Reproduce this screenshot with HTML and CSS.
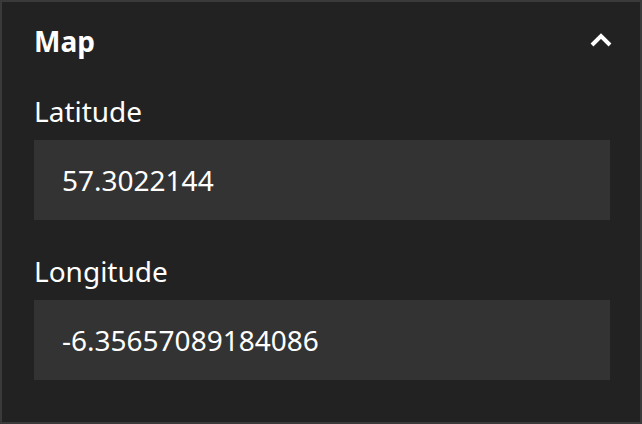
FILE: index.html
```html
<!DOCTYPE html>
<html>
<head>
<meta charset="utf-8">
<link rel="stylesheet" href="styles.css">
</head>
<body>
<section class="panel">
  <header class="panel-header">
    <h2 class="panel-title">Map</h2>
    <button class="collapse-btn" aria-label="Collapse">
      <svg width="28" height="18" viewBox="0 0 28 18"><polyline points="5,13 14,4 23,13" fill="none" stroke="#ffffff" stroke-width="4" stroke-linejoin="miter"/></svg>
    </button>
  </header>
  <div class="field">
    <label class="field-label">Latitude</label>
    <div class="field-input">57.3022144</div>
  </div>
  <div class="field">
    <label class="field-label">Longitude</label>
    <div class="field-input">-6.35657089184086</div>
  </div>
</section>
</body>
</html>
```
FILE: styles.css
```css
html, body {
  margin: 0;
  padding: 0;
  background: #222222;
}
.panel {
  box-sizing: border-box;
  width: 642px;
  height: 424px;
  border: 2px solid #3a3a3a;
  background: #222222;
  padding: 20px 30px 0 32px;
  font-family: "Noto Sans", "DejaVu Sans", sans-serif;
  color: #ffffff;
}
.panel-header {
  display: flex;
  align-items: center;
  justify-content: space-between;
}
.panel-title {
  margin: 0;
  font-size: 28px;
  line-height: 38px;
  font-weight: 700;
}
.collapse-btn {
  background: none;
  border: 0;
  padding: 0;
  margin-right: -5px;
  display: flex;
}
.field {
  margin-top: 32px;
  display: flex;
  flex-direction: column;
}
.field-label {
  font-size: 28px;
  line-height: 38px;
  margin-bottom: 10px;
}
.field-input {
  height: 80px;
  background: #333333;
  display: flex;
  align-items: center;
  padding-left: 28px;
  font-size: 28px;
  line-height: 38px;
}
```
